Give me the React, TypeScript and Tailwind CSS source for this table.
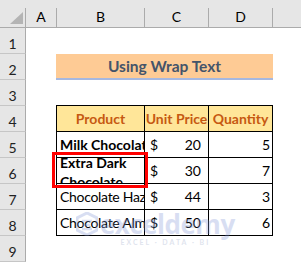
import React from "react";

const cols = [
  { l: "A", w: "w-[31px]" },
  { l: "B", w: "w-[88px]" },
  { l: "C", w: "w-[64px]" },
  { l: "D", w: "w-[64px]" },
];

function RowHead({ n }: { n: number }) {
  return (
    <div className="w-[26px] h-full shrink-0 bg-[#e6e6e6] border-r border-b border-r-[#ababab] border-b-[#c6c6c6] flex items-center justify-center pt-[6px] text-[14px] text-[#222]">
      {n}
    </div>
  );
}

type R = { p: React.ReactNode; price: string; q: string; bold?: boolean; wrap?: boolean };

const data: R[] = [
  { p: "Milk Chocolate", price: "20", q: "5", bold: true },
  { p: "Extra Dark Chocolate", price: "30", q: "7", bold: true, wrap: true },
  { p: "Chocolate Hazelnut", price: "44", q: "3" },
  { p: "Chocolate Almond", price: "50", q: "6" },
];

export default function App() {
  return (
    <div className="relative w-[301px] h-[262px] overflow-hidden bg-white font-['Lato',sans-serif] text-black">
      {/* column header */}
      <div className="flex h-[28px] bg-[#e6e6e6] border-b border-[#ababab]">
        <div className="relative w-[26px] h-full flex">
          <div className="flex-1 relative">
            <svg className="absolute left-[10px] top-[12px]" width="13" height="12" viewBox="0 0 13 12">
              <polygon points="13,0 13,12 0,12" fill="#b4b4b4" />
            </svg>
          </div>
          <div className="w-px h-[19px] self-end bg-[#ababab]" />
        </div>
        {cols.map((c) => (
          <div key={c.l} className={`${c.w} h-full flex`}>
            <div className="flex-1 flex items-center justify-center pt-[6px] text-[14px]">{c.l}</div>
            <div className="w-px h-[19px] self-end bg-[#ababab]" />
          </div>
        ))}
        <div className="flex-1" />
      </div>

      {/* row 1 */}
      <div className="flex h-[26px]">
        <RowHead n={1} />
      </div>
      {/* row 2 */}
      <div className="flex h-[26px]">
        <RowHead n={2} />
        <div className="w-[30px]" />
        <div className="w-[217px] h-full bg-[#fecb95] border-b-2 border-[#a6b8e0] flex items-center justify-center text-[15.5px] font-bold text-[#44546a] pt-[1px]">
          Using Wrap Text
        </div>
      </div>
      {/* row 3 */}
      <div className="flex h-[26px]">
        <RowHead n={3} />
        <div className="w-[30px]" />
        <div className="w-[217px] h-full border-b border-black" />
      </div>
      {/* row 4 header */}
      <div className="flex h-[26px]">
        <RowHead n={4} />
        <div className="w-[30px]" />
        <div className="w-[89px] h-full bg-[#ffe699] border-l border-r border-b border-black flex items-center justify-center text-[14px] font-bold text-[#c65911]">
          Product
        </div>
        <div className="w-[64px] h-full bg-[#ffe699] border-r border-b border-black flex items-center justify-center text-[14px] font-bold text-[#c65911] whitespace-nowrap overflow-hidden">
          Unit Price
        </div>
        <div className="w-[64px] h-full bg-[#ffe699] border-r border-b border-black flex items-center justify-center text-[14px] font-bold text-[#c65911]">
          Quantity
        </div>
      </div>
      {data.map((r, i) => (
        <div key={i} className="flex h-[26px]">
          <RowHead n={5 + i} />
          <div className="w-[30px]" />
          <div className={`w-[89px] h-full border-l border-r border-b border-black overflow-hidden text-[14px] ${r.bold ? "font-bold" : "tracking-[-0.3px]"}`}>
            {r.wrap ? (
              <div className="pl-[3px] leading-[19px] mt-[-5px]">
                <div>Extra Dark</div>
                <div>Chocolate</div>
              </div>
            ) : (
              <div className="h-full flex items-center pl-[3px] whitespace-nowrap">{r.p}</div>
            )}
          </div>
          <div className="w-[64px] h-full border-r border-b border-black flex items-center justify-between pl-[5px] pr-[7px] text-[14px]">
            <span>$</span>
            <span>{r.price}</span>
          </div>
          <div className="w-[64px] h-full border-r border-b border-black flex items-center justify-end pr-[2px] text-[14px]">
            {r.q}
          </div>
        </div>
      ))}
      {/* row 9 */}
      <div className="flex h-[26px]">
        <RowHead n={9} />
      </div>

      {/* red highlight */}
      <div className="absolute left-[52px] top-[152px] w-[96px] h-[36px] border-[3px] border-[#ff0000]" />

      {/* watermark */}
      <div className="absolute left-[76px] top-[210px] flex flex-col items-center pointer-events-none opacity-30">
        <div className="flex items-center gap-[2px]">
          <svg width="22" height="24" viewBox="0 0 22 24">
            <path d="M11 1 L21 6 L21 18 L11 23 L1 18 L1 6 Z" fill="none" stroke="#7f95d6" strokeWidth="3" />
            <path d="M6 9 L16 9 M6 13 L14 13 M6 17 L16 17" stroke="#7f95d6" strokeWidth="2.5" />
          </svg>
          <span className="text-[26px] font-bold leading-[28px] text-[#7f95d6] tracking-[-0.5px] font-['Open_Sans',sans-serif]">exceldemy</span>
        </div>
        <span className="text-[7px] font-bold tracking-[2px] text-[#9aa6c8] leading-[8px] ml-[20px]">EXCEL · DATA · BI</span>
      </div>
    </div>
  );
}
